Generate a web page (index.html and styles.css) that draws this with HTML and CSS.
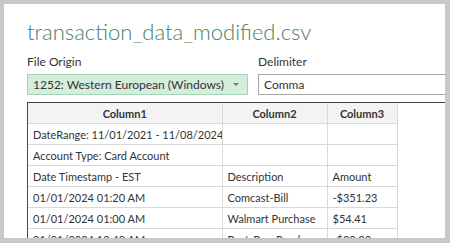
FILE: index.html
```html
<!DOCTYPE html>
<html lang="en">
<head>
    <meta charset="UTF-8">
    <title>transaction_data_modified.csv</title>
    <link rel="stylesheet" href="styles.css">
</head>
<body>

<div class="panel">
    <h1 class="title">transaction_data_modified.csv</h1>

    <!-- Import options -->
    <div class="options">
        <div class="field origin">
            <label>File Origin</label>
            <div class="select">
                <span>1252: Western European (Windows)</span>
                <span class="arrow"></span>
            </div>
        </div>
        <div class="field delimiter">
            <label>Delimiter</label>
            <div class="select plain">
                <span>Comma</span>
            </div>
        </div>
    </div>

    <!-- Preview grid -->
    <div class="preview">
        <table class="grid">
            <colgroup>
                <col class="c1">
                <col class="c2">
                <col class="c3">
            </colgroup>
            <thead>
                <tr><th>Column1</th><th>Column2</th><th>Column3</th></tr>
            </thead>
            <tbody>
                <tr><td>DateRange: 11/01/2021 - 11/08/2024</td><td></td><td></td></tr>
                <tr><td>Account Type: Card Account</td><td></td><td></td></tr>
                <tr><td>Date Timestamp - EST</td><td>Description</td><td>Amount</td></tr>
                <tr><td>01/01/2024 01:20 AM</td><td>Comcast-Bill</td><td>-$351.23</td></tr>
                <tr><td>01/01/2024 01:00 AM</td><td>Walmart Purchase</td><td>$54.41</td></tr>
                <tr><td>01/01/2024 12:40 AM</td><td>Best-Buy-Purchase</td><td>-$33.32</td></tr>
            </tbody>
        </table>
    </div>
</div>

</body>
</html>
```

FILE: styles.css
```css
/* Dialog frame */
body {
    margin: 0;
    background-color: #c8c8c8;
    font-family: Lato, "Noto Sans", Arial, sans-serif;
    color: #333;
}

.panel {
    background-color: #fff;
    margin: 4px 5px 5px 4px;
    height: 234px;
    padding: 14px 0 0 23px;
    box-sizing: border-box;
    overflow: hidden;
}

.title {
    margin: 0;
    font-size: 22px;
    font-weight: 300;
    line-height: 28px;
    color: #4a8068;
    white-space: nowrap;
}

.options {
    display: flex;
    gap: 10px;
    margin-top: 8px;
}

.field label {
    display: block;
    font-size: 12px;
    line-height: 16px;
    margin-bottom: 4px;
}

.origin {
    flex: 0 0 221px;
}

.delimiter {
    flex: 0 0 200px;
}

.select {
    display: flex;
    align-items: center;
    justify-content: space-between;
    height: 21px;
    box-sizing: border-box;
    padding: 0 8px 0 5px;
    background-color: #d4eddc;
    border: 1px solid #a4d6b6;
    font-size: 12px;
    white-space: nowrap;
}

.select.plain {
    background-color: #fff;
    border-color: #a6a6a6;
}

.arrow {
    width: 0;
    height: 0;
    border-left: 3px solid transparent;
    border-right: 3px solid transparent;
    border-top: 3px solid #777;
}

/* Preview */
.preview {
    margin-top: 7px;
    border-top: 1px solid #444;
    border-left: 1px solid #444;
    width: 500px;
}

.grid {
    border-collapse: collapse;
    table-layout: fixed;
    width: 369px;
    font-size: 11px;
}

.grid .c1 { width: 194px; }
.grid .c2 { width: 105px; }
.grid .c3 { width: 70px; }

.grid th,
.grid td {
    height: 20px;
    padding: 0 5px;
    border-right: 1px solid #d9d9d9;
    border-bottom: 1px solid #d9d9d9;
    white-space: nowrap;
    overflow: hidden;
    text-align: left;
}

.grid th {
    background-color: #f3f3f3;
    font-weight: bold;
    text-align: center;
}
```
